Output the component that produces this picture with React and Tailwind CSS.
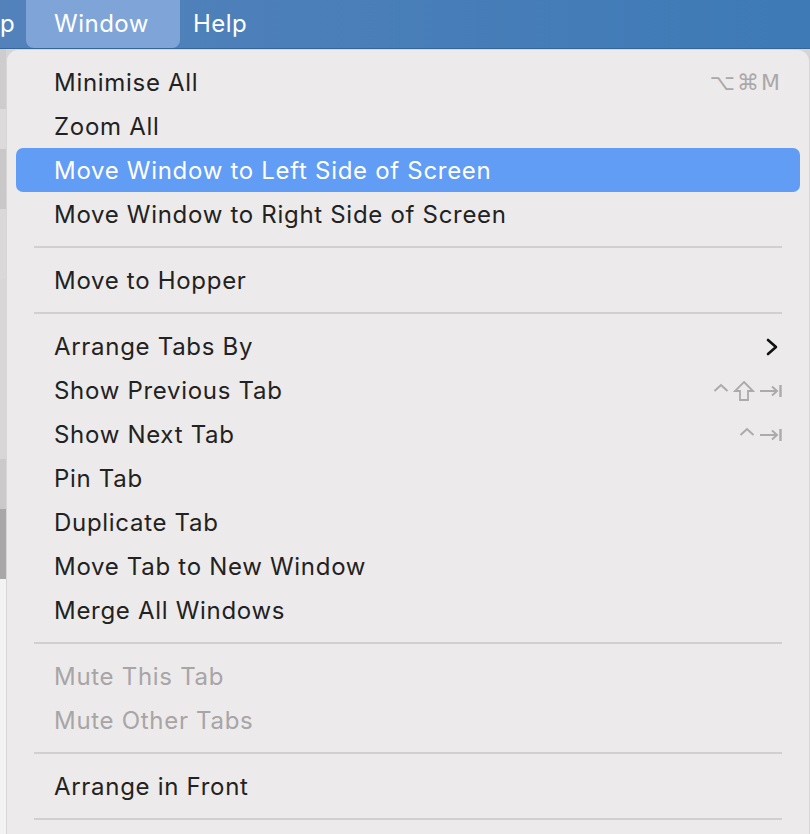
import React from 'react';

const GRAY = '#acaaab';

function Caret() {
  return (
    <svg width="16" height="20" viewBox="0 0 16 20">
      <path d="M1.5 10 L8 4 L14.5 10" fill="none" stroke={GRAY} strokeWidth="2" />
    </svg>
  );
}

function Shift() {
  return (
    <svg width="22" height="22" viewBox="0 0 22 22">
      <path d="M11 2 L20 11 L15 11 L15 20 L7 20 L7 11 L2 11 Z" fill="none" stroke={GRAY} strokeWidth="1.8" strokeLinejoin="miter" />
    </svg>
  );
}

function Tab() {
  return (
    <svg width="23" height="20" viewBox="0 0 23 20">
      <path d="M1 10 H18 M13 5.5 L18 10 L13 14.5" fill="none" stroke={GRAY} strokeWidth="2" />
      <path d="M21.5 4 V16" stroke={GRAY} strokeWidth="2.4" />
    </svg>
  );
}

const sections = [
  [
    { label: 'Minimise All', shortcut: 'min' },
    { label: 'Zoom All' },
    { label: 'Move Window to Left Side of Screen', active: true },
    { label: 'Move Window to Right Side of Screen' },
  ],
  [{ label: 'Move to Hopper' }],
  [
    { label: 'Arrange Tabs By', submenu: true },
    { label: 'Show Previous Tab', shortcut: 'prev' },
    { label: 'Show Next Tab', shortcut: 'next' },
    { label: 'Pin Tab' },
    { label: 'Duplicate Tab' },
    { label: 'Move Tab to New Window' },
    { label: 'Merge All Windows' },
  ],
  [
    { label: 'Mute This Tab', disabled: true },
    { label: 'Mute Other Tabs', disabled: true },
  ],
  [{ label: 'Arrange in Front' }],
];

function Shortcut({ kind }) {
  if (kind === 'min') {
    return (
      <span className="text-[22px] text-[#aaa8a9] leading-none tracking-[2px]" style={{ fontFamily: '"DejaVu Sans", sans-serif' }}>
        ⌥⌘M
      </span>
    );
  }
  return (
    <span className="flex items-center gap-[4px]">
      <Caret />
      {kind === 'prev' && <Shift />}
      <Tab />
    </span>
  );
}

function MenuItem({ item }) {
  const tone = item.active ? 'bg-[#619cf5] text-white' : item.disabled ? 'text-[#a7a5a6]' : 'text-[#222]';
  return (
    <div className={`flex items-center h-[44px] rounded-[7px] pl-[38px] pr-[18px] pt-[2px] ${tone}`}>
      <span className="flex-1 text-[24px] leading-none tracking-[0.7px]">{item.label}</span>
      {item.shortcut && <Shortcut kind={item.shortcut} />}
      {item.submenu && (
        <svg width="14" height="18" viewBox="0 0 14 18" className="mr-[3px]">
          <path d="M3 2 L11 9 L3 16" fill="none" stroke="#111" strokeWidth="2.6" strokeLinecap="round" strokeLinejoin="round" />
        </svg>
      )}
    </div>
  );
}

export default function App() {
  return (
    <div className="w-[810px] h-[834px] overflow-hidden flex flex-col bg-[#d6d4d5]" style={{ fontFamily: 'Inter, "Noto Sans", sans-serif' }}>
      <div className="h-[49px] shrink-0 flex items-stretch bg-gradient-to-r from-[#5382bb] to-[#3d7ab6] border-b border-[#34669c] text-white text-[24px] tracking-[0.5px]">
        <span className="flex items-center w-[26px]">p</span>
        <span className="flex items-center pl-[28px] pr-[31px] bg-[#7fa5d8] rounded-b-[8px]">Window</span>
        <span className="flex items-center pl-[13px]">Help</span>
      </div>
      <div className="flex flex-1 min-h-0">
        <div className="w-[6px] shrink-0 flex flex-col">
          <div className="h-[60px] bg-[#cfcccd]" />
          <div className="h-[40px] bg-[#dcdadb]" />
          <div className="h-[60px] bg-[#c9c7c8]" />
          <div className="h-[70px] bg-[#dad8d9]" />
          <div className="h-[180px] bg-[#d8d6d7]" />
          <div className="h-[50px] bg-[#cbc9ca]" />
          <div className="h-[70px] bg-[#a9a7a8]" />
          <div className="flex-1 bg-[#f4f3f3]" />
        </div>
        <div className="flex-1 bg-[#edeaeb] rounded-tl-[12px] rounded-tr-[12px] mr-[1px] border-l border-t border-[#d8d5d6] px-[9px] pt-[10px]">
          {sections.map((items, i) => (
            <div key={i}>
              {items.map((item) => (
                <MenuItem key={item.label} item={item} />
              ))}
              <div className="h-[22px] flex items-center px-[18px]">
                <div className="h-[2px] w-full bg-[#d2cfd0]" />
              </div>
            </div>
          ))}
        </div>
      </div>
    </div>
  );
}
